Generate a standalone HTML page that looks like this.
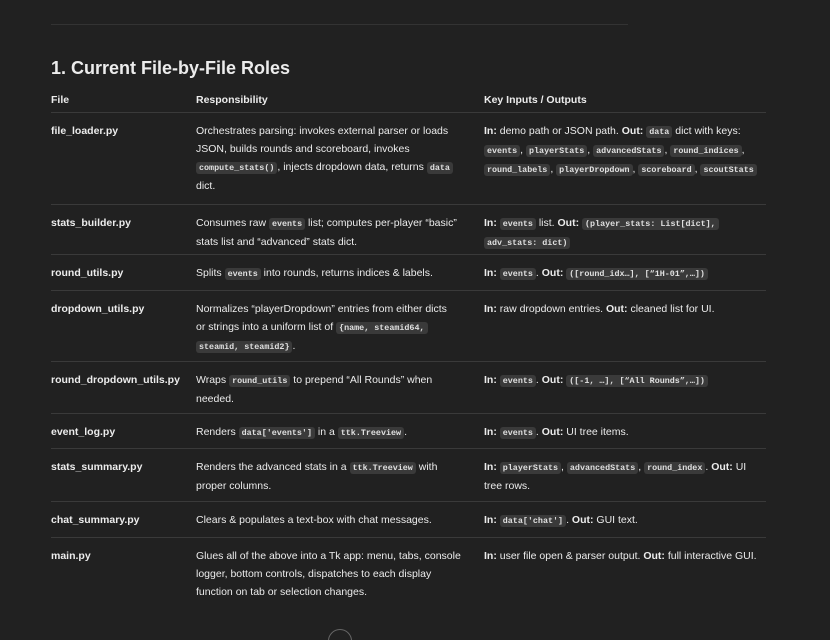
<!DOCTYPE html>
<html><head><meta charset="utf-8"><style>
html,body{margin:0;height:640px;overflow:hidden}
body{background:#212121;width:830px;font-family:"Liberation Sans",sans-serif;color:#ececec;position:relative}
.hr{position:absolute;left:51px;width:577px;top:24px;height:1px;background:#333}
h2{position:absolute;left:51px;top:56px;margin:0;font-size:18px;font-weight:bold;line-height:24px}
.row{position:absolute;left:51px;width:715px;border-bottom:1px solid #3a3a3a;font-size:10.5px;line-height:18px}
.row div{position:absolute;top:9px;white-space:nowrap}
.c1{left:0;font-weight:bold}
.c2{left:145px}
.c3{left:433px}
code{font-family:"Liberation Mono",monospace;font-size:8.4px;background:#3a3a3a;border-radius:3px;padding:1px 3px;font-weight:bold;color:#e0e0e0}
b{font-weight:bold}
.circ{position:absolute;left:328px;top:629px;width:22px;height:22px;border:1px solid #666;border-radius:50%}
</style></head><body>
<div class="hr"></div>
<h2>1. Current File-by-File Roles</h2>
<div class="row" style="top:82px;height:30px"><div class="c1">File</div><div class="c2" style="font-weight:bold">Responsibility</div><div class="c3" style="font-weight:bold">Key Inputs / Outputs</div></div>
<div class="row" style="top:113px;height:91px"><div class="c1">file_loader.py</div><div class="c2">Orchestrates parsing: invokes external parser or loads<br>JSON, builds rounds and scoreboard, invokes<br><code>compute_stats()</code>, injects dropdown data, returns <code>data</code><br>dict.</div><div class="c3"><b>In:</b> demo path or JSON path. <b>Out:</b> <code>data</code> dict with keys:<br><code>events</code>, <code>playerStats</code>, <code>advancedStats</code>, <code>round_indices</code>,<br><code>round_labels</code>, <code>playerDropdown</code>, <code>scoreboard</code>, <code>scoutStats</code></div></div>
<div class="row" style="top:205px;height:49px"><div class="c1">stats_builder.py</div><div class="c2">Consumes raw <code>events</code> list; computes per-player “basic”<br>stats list and “advanced” stats dict.</div><div class="c3"><b>In:</b> <code>events</code> list. <b>Out:</b> <code>(player_stats: List[dict],</code><br><code>adv_stats: dict)</code></div></div>
<div class="row" style="top:255px;height:35px"><div class="c1">round_utils.py</div><div class="c2">Splits <code>events</code> into rounds, returns indices &amp; labels.</div><div class="c3"><b>In:</b> <code>events</code>. <b>Out:</b> <code>([round_idx…], [“1H-01”,…])</code></div></div>
<div class="row" style="top:291px;height:70px"><div class="c1">dropdown_utils.py</div><div class="c2">Normalizes “playerDropdown” entries from either dicts<br>or strings into a uniform list of <code>{name, steamid64,</code><br><code>steamid, steamid2}</code>.</div><div class="c3"><b>In:</b> raw dropdown entries. <b>Out:</b> cleaned list for UI.</div></div>
<div class="row" style="top:362px;height:51px"><div class="c1">round_dropdown_utils.py</div><div class="c2">Wraps <code>round_utils</code> to prepend “All Rounds” when<br>needed.</div><div class="c3"><b>In:</b> <code>events</code>. <b>Out:</b> <code>([-1, …], [“All Rounds”,…])</code></div></div>
<div class="row" style="top:414px;height:34px"><div class="c1">event_log.py</div><div class="c2">Renders <code>data['events']</code> in a <code>ttk.Treeview</code>.</div><div class="c3"><b>In:</b> <code>events</code>. <b>Out:</b> UI tree items.</div></div>
<div class="row" style="top:449px;height:52px"><div class="c1">stats_summary.py</div><div class="c2">Renders the advanced stats in a <code>ttk.Treeview</code> with<br>proper columns.</div><div class="c3"><b>In:</b> <code>playerStats</code>, <code>advancedStats</code>, <code>round_index</code>. <b>Out:</b> UI<br>tree rows.</div></div>
<div class="row" style="top:502px;height:35px"><div class="c1">chat_summary.py</div><div class="c2">Clears &amp; populates a text-box with chat messages.</div><div class="c3"><b>In:</b> <code>data['chat']</code>. <b>Out:</b> GUI text.</div></div>
<div class="row" style="top:538px;height:70px;border-bottom:none"><div class="c1">main.py</div><div class="c2">Glues all of the above into a Tk app: menu, tabs, console<br>logger, bottom controls, dispatches to each display<br>function on tab or selection changes.</div><div class="c3"><b>In:</b> user file open &amp; parser output. <b>Out:</b> full interactive GUI.</div></div>
<div class="circ"></div>
</body></html>
